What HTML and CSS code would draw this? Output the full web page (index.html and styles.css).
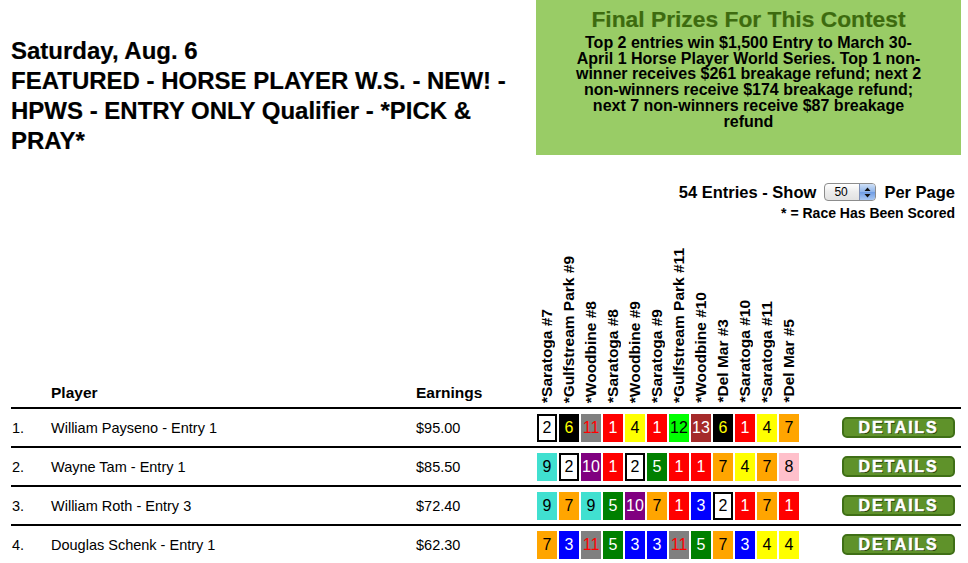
FILE: index.html
```html
<!DOCTYPE html>
<html>
<head>
<meta charset="utf-8">
<title>Contest Standings</title>
<link rel="stylesheet" href="styles.css">
</head>
<body>
<div class="page">
  <header class="top">
    <div class="title">
      <div>Saturday, Aug. 6</div>
      <div>FEATURED - HORSE PLAYER W.S. - NEW! - HPWS - ENTRY ONLY Qualifier - *PICK &amp; PRAY*</div>
    </div>
    <div class="prizes">
      <h2>Final Prizes For This Contest</h2>
      <p>Top 2 entries win $1,500 Entry to March 30-April 1 Horse Player World Series. Top 1 non-winner receives $261 breakage refund; next 2 non-winners receive $174 breakage refund; next 7 non-winners receive $87 breakage refund</p>
    </div>
  </header>

  <div class="controls">
    <span>54 Entries - Show</span>
    <div class="select"><span class="val">50</span><span class="arrows"><svg width="7" height="11" viewBox="0 0 7 11"><path d="M3.5 0.5 L6.5 4 L0.5 4 Z M3.5 10.5 L6.5 7 L0.5 7 Z" fill="#111"/></svg></span></div>
    <span>Per Page</span>
  </div>
  <div class="legend">* = Race Has Been Scored</div>

  <div class="board">
    <div class="row head">
      <div></div>
      <div class="hcell">Player</div>
      <div class="hcell">Earnings</div>
      <div class="vheads">
        <div class="vh">*Saratoga #7</div>
        <div class="vh">*Gulfstream Park #9</div>
        <div class="vh">*Woodbine #8</div>
        <div class="vh">*Saratoga #8</div>
        <div class="vh">*Woodbine #9</div>
        <div class="vh">*Saratoga #9</div>
        <div class="vh">*Gulfstream Park #11</div>
        <div class="vh">*Woodbine #10</div>
        <div class="vh">*Del Mar #3</div>
        <div class="vh">*Saratoga #10</div>
        <div class="vh">*Saratoga #11</div>
        <div class="vh">*Del Mar #5</div>
      </div>
      <div></div>
    </div>

    <div class="row">
      <div class="rank">1.</div>
      <div class="name">William Payseno - Entry 1</div>
      <div class="earn">$95.00</div>
      <div class="picks">
        <span class="b n2">2</span><span class="b n6">6</span><span class="b n11">11</span><span class="b n1">1</span><span class="b n4">4</span><span class="b n1">1</span><span class="b n12">12</span><span class="b n13">13</span><span class="b n6">6</span><span class="b n1">1</span><span class="b n4">4</span><span class="b n7">7</span>
      </div>
      <div><a class="btn">DETAILS</a></div>
    </div>

    <div class="row">
      <div class="rank">2.</div>
      <div class="name">Wayne Tam - Entry 1</div>
      <div class="earn">$85.50</div>
      <div class="picks">
        <span class="b n9">9</span><span class="b n2">2</span><span class="b n10">10</span><span class="b n1">1</span><span class="b n2">2</span><span class="b n5">5</span><span class="b n1">1</span><span class="b n1">1</span><span class="b n7">7</span><span class="b n4">4</span><span class="b n7">7</span><span class="b n8">8</span>
      </div>
      <div><a class="btn">DETAILS</a></div>
    </div>

    <div class="row">
      <div class="rank">3.</div>
      <div class="name">William Roth - Entry 3</div>
      <div class="earn">$72.40</div>
      <div class="picks">
        <span class="b n9">9</span><span class="b n7">7</span><span class="b n9">9</span><span class="b n5">5</span><span class="b n10">10</span><span class="b n7">7</span><span class="b n1">1</span><span class="b n3">3</span><span class="b n2">2</span><span class="b n1">1</span><span class="b n7">7</span><span class="b n1">1</span>
      </div>
      <div><a class="btn">DETAILS</a></div>
    </div>

    <div class="row">
      <div class="rank">4.</div>
      <div class="name">Douglas Schenk - Entry 1</div>
      <div class="earn">$62.30</div>
      <div class="picks">
        <span class="b n7">7</span><span class="b n3">3</span><span class="b n11">11</span><span class="b n5">5</span><span class="b n3">3</span><span class="b n3">3</span><span class="b n11">11</span><span class="b n5">5</span><span class="b n7">7</span><span class="b n3">3</span><span class="b n4">4</span><span class="b n4">4</span>
      </div>
      <div><a class="btn">DETAILS</a></div>
    </div>
  </div>
</div>
</body>
</html>
```
FILE: styles.css
```css
html, body {
  margin: 0;
  padding: 0;
  background: #fff;
  color: #000;
  font-family: "Liberation Sans", Arial, Helvetica, sans-serif;
}

.page {
  padding: 0 7px 0 11px;
}

.top {
  display: flex;
  justify-content: space-between;
  align-items: flex-start;
}

.title {
  width: 518px;
  padding-top: 36px;
  font-weight: bold;
  font-size: 24px;
  line-height: 30px;
  -webkit-text-stroke: 0.2px #000;
}

.prizes {
  width: 425px;
  height: 155px;
  box-sizing: border-box;
  background: #99cc66;
  text-align: center;
  padding-top: 6px;
}

.prizes h2 {
  margin: 0;
  font-size: 22.8px;
  line-height: 26px;
  font-weight: bold;
  color: #3d6b0f;
  -webkit-text-stroke: 0.2px #3d6b0f;
}

.prizes p {
  margin: 3px auto 0;
  width: 360px;
  font-size: 16px;
  line-height: 15.7px;
  font-weight: bold;
}

.controls {
  display: flex;
  justify-content: flex-end;
  align-items: center;
  gap: 8px;
  height: 20px;
  margin-top: 26px;
  margin-right: 6px;
  font-weight: bold;
  font-size: 16.5px;
  line-height: 20px;
}

.select {
  display: flex;
  width: 52px;
  height: 18px;
  box-sizing: border-box;
  border: 1px solid #8c8c8c;
  border-radius: 4px;
  background: linear-gradient(#ffffff, #ececec 50%, #e2e2e2);
  overflow: hidden;
  font-weight: normal;
}

.select .val {
  flex: 1;
  font-size: 12px;
  line-height: 16px;
  padding-left: 9px;
}

.select .arrows {
  width: 15px;
  display: flex;
  align-items: center;
  justify-content: center;
  border-left: 1px solid #7d8fb5;
  background: linear-gradient(#cfe0f7, #8fb4ea 50%, #6f9ce4 51%, #a9c8f3);
}

.legend {
  text-align: right;
  margin-top: 3px;
  margin-right: 6px;
  font-weight: bold;
  font-size: 14px;
  line-height: 16px;
}

.row {
  display: grid;
  grid-template-columns: 40px 365px 121px 305px 1fr;
  align-items: center;
  height: 37px;
  border-bottom: 2px solid #000;
  font-size: 14.5px;
  line-height: 16px;
}

.row.head {
  height: 186px;
  align-items: end;
}

.hcell {
  font-weight: bold;
  font-size: 15.5px;
  line-height: 18px;
  padding-bottom: 5px;
}

.vheads {
  display: flex;
  gap: 2px;
  align-items: flex-end;
  padding-bottom: 4px;
}

.vh {
  width: 20px;
  writing-mode: vertical-rl;
  transform: rotate(180deg);
  white-space: nowrap;
  font-weight: bold;
  font-size: 15.5px;
  line-height: 20px;
}

.rank {
  padding-left: 1px;
}

.picks {
  display: flex;
  gap: 2px;
}

.b {
  width: 20px;
  height: 28px;
  box-sizing: border-box;
  text-align: center;
  font-size: 16px;
  line-height: 28px;
}

.n1 { background: #ff0000; color: #fff; }
.n2 { background: #fff; color: #000; border: 2px solid #000; line-height: 24px; }
.n3 { background: #0000ff; color: #fff; }
.n4 { background: #ffff00; color: #000; }
.n5 { background: #008000; color: #fff; }
.n6 { background: #000; color: #ffff00; }
.n7 { background: #ffa500; color: #000; }
.n8 { background: #ffc0cb; color: #000; }
.n9 { background: #40e0d0; color: #000; }
.n10 { background: #800080; color: #fff; }
.n11 { background: #808080; color: #ff0000; }
.n12 { background: #00ff00; color: #000; }
.n13 { background: #a52a2a; color: #fff; }

.btn {
  display: block;
  width: 113px;
  height: 21px;
  box-sizing: border-box;
  border: 2px solid #3f6f16;
  border-radius: 5px;
  background: #5f922a;
  color: #fff;
  text-align: center;
  font-weight: bold;
  font-size: 16px;
  line-height: 17px;
  letter-spacing: 1.8px;
  text-shadow: 1px 1px 0 #1f3f08;
  -webkit-text-stroke: 0.5px #fff;
}
```
